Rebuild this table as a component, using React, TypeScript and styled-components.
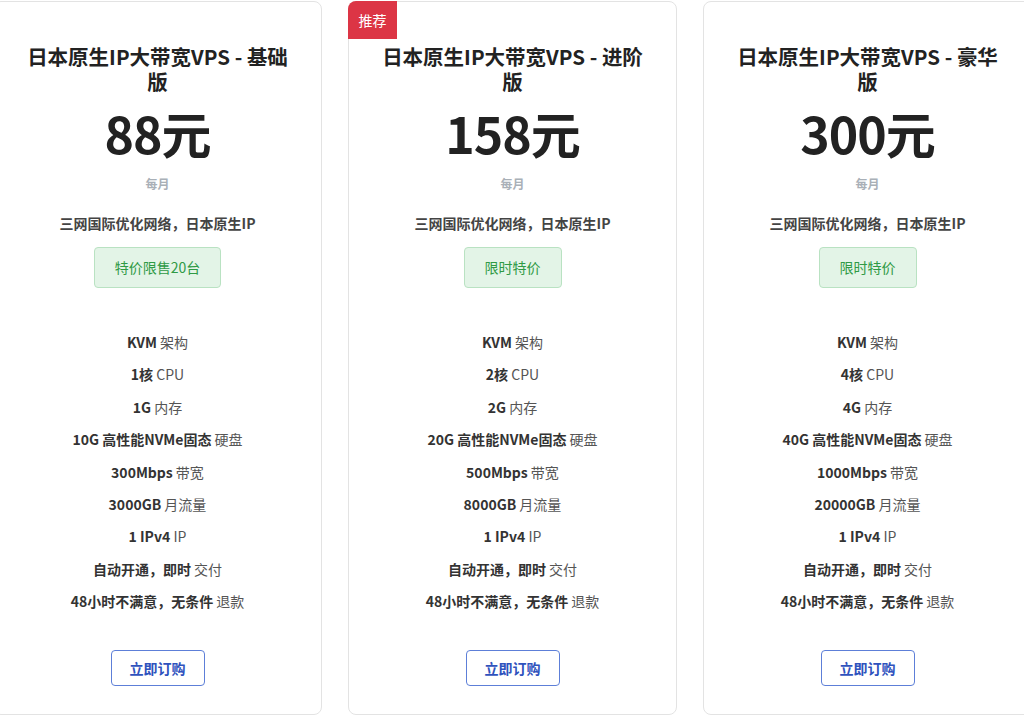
import React from 'react';
import styled, { createGlobalStyle } from 'styled-components';

const GlobalStyle = createGlobalStyle`
  body {
    margin: 0;
    background: #fff;
    font-family: "Noto Sans CJK SC", "Noto Sans", sans-serif;
    color: #212529;
  }
`;

const Row = styled.div`
  display: flex;
  gap: 26px;
  margin-left: -7px;
  padding-top: 1px;
`;

const Card = styled.div`
  position: relative;
  flex: 0 0 329px;
  height: 714px;
  box-sizing: border-box;
  border: 1px solid #e3e3e3;
  border-radius: 8px;
  padding: 42px 26px 0;
  display: flex;
  flex-direction: column;
  align-items: center;
  text-align: center;
`;

const Ribbon = styled.span`
  position: absolute;
  top: -1px;
  left: -1px;
  width: 49px;
  height: 38px;
  background: #dc3545;
  color: #fff;
  font-size: 14px;
  line-height: 38px;
  border-top-left-radius: 8px;
`;

const Title = styled.h3`
  margin: 0;
  font-size: 20.5px;
  line-height: 25px;
  font-weight: 700;
  color: #222;
`;

const Price = styled.div`
  margin-top: 8px;
  font-size: 50px;
  line-height: 60px;
  font-weight: 700;
  color: #222;
  letter-spacing: -1px;
`;

const Period = styled.div`
  margin-top: 14px;
  font-size: 12px;
  line-height: 16px;
  font-weight: 700;
  color: #a9b0b7;
`;

const Subtitle = styled.div`
  margin-top: 21px;
  font-size: 14px;
  line-height: 20px;
  font-weight: 700;
  color: #444;
`;

const Promo = styled.div`
  margin-top: 14px;
  height: 41px;
  box-sizing: border-box;
  padding: 0 20px;
  min-width: 97px;
  border: 1px solid #b9e2c2;
  border-radius: 4px;
  background: #e3f4e7;
  color: #2f9a45;
  font-size: 14px;
  line-height: 39px;
`;

const Features = styled.ul`
  list-style: none;
  margin: 44px 0 0;
  padding: 0;
  display: flex;
  flex-direction: column;
  gap: 12.4px;
`;

const Feature = styled.li`
  font-size: 14px;
  line-height: 20px;
  color: #555;

  b {
    font-weight: 700;
    color: #333;
  }
`;

const BuyButton = styled.button`
  margin-top: 39px;
  height: 36px;
  padding: 0 18px;
  background: #fff;
  border: 1px solid #5d7fd8;
  border-radius: 4px;
  color: #2f52bd;
  font-family: inherit;
  font-size: 14px;
  font-weight: 700;
  cursor: pointer;
`;

type Plan = {
  name: string;
  price: string;
  promo: string;
  cores: string;
  mem: string;
  disk: string;
  bw: string;
  traffic: string;
  hot?: boolean;
};

const plans: Plan[] = [
  { name: '基础版', price: '88', promo: '特价限售20台', cores: '1', mem: '1G', disk: '10G', bw: '300Mbps', traffic: '3000GB' },
  { name: '进阶版', price: '158', promo: '限时特价', cores: '2', mem: '2G', disk: '20G', bw: '500Mbps', traffic: '8000GB', hot: true },
  { name: '豪华版', price: '300', promo: '限时特价', cores: '4', mem: '4G', disk: '40G', bw: '1000Mbps', traffic: '20000GB' },
];

const PlanCard = ({ plan }: { plan: Plan }) => (
  <Card>
    {plan.hot && <Ribbon>推荐</Ribbon>}
    <Title>日本原生IP大带宽VPS - {plan.name}</Title>
    <Price>{plan.price}元</Price>
    <Period>每月</Period>
    <Subtitle>三网国际优化网络，日本原生IP</Subtitle>
    <Promo>{plan.promo}</Promo>
    <Features>
      <Feature><b>KVM</b> 架构</Feature>
      <Feature><b>{plan.cores}核</b> CPU</Feature>
      <Feature><b>{plan.mem}</b> 内存</Feature>
      <Feature><b>{plan.disk} 高性能NVMe固态</b> 硬盘</Feature>
      <Feature><b>{plan.bw}</b> 带宽</Feature>
      <Feature><b>{plan.traffic}</b> 月流量</Feature>
      <Feature><b>1 IPv4</b> IP</Feature>
      <Feature><b>自动开通，即时</b> 交付</Feature>
      <Feature><b>48小时不满意，无条件</b> 退款</Feature>
    </Features>
    <BuyButton>立即订购</BuyButton>
  </Card>
);

const App = () => (
  <>
    <GlobalStyle />
    <Row>
      {plans.map((p) => (
        <PlanCard key={p.name} plan={p} />
      ))}
    </Row>
  </>
);

export default App;
